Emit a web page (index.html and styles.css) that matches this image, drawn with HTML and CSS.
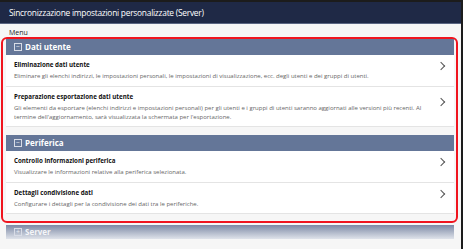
FILE: index.html
```html
<!DOCTYPE html>
<html lang="it">
<head>
    <meta charset="UTF-8">
    <title>Sincronizzazione impostazioni personalizzate (Server)</title>
    <link rel="stylesheet" href="styles.css">
</head>
<body>
    <div class="window">
        <div class="title-bar">Sincronizzazione impostazioni personalizzate (Server)</div>
        <div class="page">
            <div class="menu-label">Menu</div>

            <div class="highlight">
                <!-- Dati utente -->
                <div class="section">
                    <div class="section-head"><span class="toggle">&minus;</span>Dati utente</div>
                    <div class="item">
                        <div class="item-text">
                            <div class="item-title">Eliminazione dati utente</div>
                            <div class="item-desc">Eliminare gli elenchi indirizzi, le impostazioni personali, le impostazioni di visualizzazione, ecc. degli utenti e dei gruppi di utenti.</div>
                        </div>
                        <span class="chevron"></span>
                    </div>
                    <div class="item">
                        <div class="item-text">
                            <div class="item-title">Preparazione esportazione dati utente</div>
                            <div class="item-desc">Gli elementi da esportare (elenchi indirizzi e impostazioni personali) per gli utenti e i gruppi di utenti saranno aggiornati alle versioni più recenti. Al termine dell'aggiornamento, sarà visualizzata la schermata per l'esportazione.</div>
                        </div>
                        <span class="chevron"></span>
                    </div>
                </div>

                <!-- Periferica -->
                <div class="section">
                    <div class="section-head"><span class="toggle">&minus;</span>Periferica</div>
                    <div class="item">
                        <div class="item-text">
                            <div class="item-title">Controllo informazioni periferica</div>
                            <div class="item-desc">Visualizzare le informazioni relative alla periferica selezionata.</div>
                        </div>
                        <span class="chevron"></span>
                    </div>
                    <div class="item">
                        <div class="item-text">
                            <div class="item-title">Dettagli condivisione dati</div>
                            <div class="item-desc">Configurare i dettagli per la condivisione dei dati tra le periferiche.</div>
                        </div>
                        <span class="chevron"></span>
                    </div>
                </div>
            </div>

            <div class="section-head closed"><span class="toggle">+</span>Server</div>
        </div>
    </div>
</body>
</html>
```

FILE: styles.css
```css
body {
    margin: 0;
    background: #1c1c1c;
    font-family: 'Open Sans', 'Noto Sans', sans-serif;
    color: #222;
}
.window {
    width: 461px;
    height: 247px;
    margin-top: 2px;
    background: #f6f6f6;
    overflow: hidden;
}
.title-bar {
    height: 21px;
    line-height: 21px;
    background: #1f2946;
    color: #fff;
    font-size: 8.4px;
    letter-spacing: -0.25px;
    padding-left: 9px;
    border-bottom: 1px solid #5a6582;
}
.page {
    padding: 4px 3px 0 1px;
}
.menu-label {
    font-size: 7px;
    padding-left: 8px;
    line-height: 9px;
    color: #222;
}
.highlight {
    border: 2px solid #f0141e;
    border-radius: 6px;
    padding: 0 2px 7px 3px;
}
.section + .section {
    margin-top: 8px;
}
.section-head {
    height: 16px;
    line-height: 16px;
    background: #647698;
    color: #fff;
    font-size: 8px;
    font-weight: bold;
    display: flex;
    align-items: center;
    padding-left: 8px;
}
.toggle {
    width: 6px;
    height: 6px;
    border: 1px solid #d8dce6;
    font-size: 7px;
    line-height: 6px;
    text-align: center;
    font-weight: normal;
    margin-right: 3px;
    color: #e8ebf1;
}
.section-head.closed {
    margin: 2px 4px 0 5px;
    height: 14px;
    background: linear-gradient(#7d89a5, #dfe3ea);
    color: #f4f5f8;
}
.item {
    display: flex;
    align-items: center;
    background: #fff;
    border-bottom: 1px solid #e4e4e4;
    padding: 5px 10px 4.5px 8px;
}
.item-text {
    flex: 1;
}
.item-title {
    font-size: 6.2px;
    font-weight: bold;
    line-height: 9px;
    color: #111;
    margin-bottom: 3px;
}
.item-desc {
    font-size: 6px;
    line-height: 9px;
    color: #666;
    padding-right: 4px;
}
.chevron {
    width: 5px;
    height: 5px;
    border-top: 1px solid #555;
    border-right: 1px solid #555;
    transform: rotate(45deg);
    margin-bottom: 9px;
}
```
